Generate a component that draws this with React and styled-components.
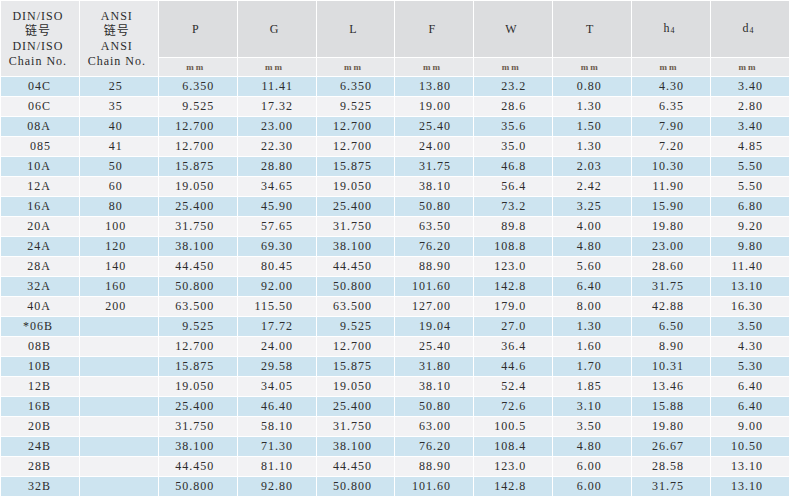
import React from "react";
import styled, { createGlobalStyle } from "styled-components";

const GlobalStyle = createGlobalStyle`
  body {
    margin: 0;
    background: #ffffff;
    font-family: "Liberation Serif", "Noto Sans CJK SC", serif;
  }
`;

const heads = ["P", "G", "L", "F", "W", "T", "h", "d"];

const rows = [
  ["04C", "25", "6.350", "11.41", "6.350", "13.80", "23.2", "0.80", "4.30", "3.40"],
  ["06C", "35", "9.525", "17.32", "9.525", "19.00", "28.6", "1.30", "6.35", "2.80"],
  ["08A", "40", "12.700", "23.00", "12.700", "25.40", "35.6", "1.50", "7.90", "3.40"],
  ["085", "41", "12.700", "22.30", "12.700", "24.00", "35.0", "1.30", "7.20", "4.85"],
  ["10A", "50", "15.875", "28.80", "15.875", "31.75", "46.8", "2.03", "10.30", "5.50"],
  ["12A", "60", "19.050", "34.65", "19.050", "38.10", "56.4", "2.42", "11.90", "5.50"],
  ["16A", "80", "25.400", "45.90", "25.400", "50.80", "73.2", "3.25", "15.90", "6.80"],
  ["20A", "100", "31.750", "57.65", "31.750", "63.50", "89.8", "4.00", "19.80", "9.20"],
  ["24A", "120", "38.100", "69.30", "38.100", "76.20", "108.8", "4.80", "23.00", "9.80"],
  ["28A", "140", "44.450", "80.45", "44.450", "88.90", "123.0", "5.60", "28.60", "11.40"],
  ["32A", "160", "50.800", "92.00", "50.800", "101.60", "142.8", "6.40", "31.75", "13.10"],
  ["40A", "200", "63.500", "115.50", "63.500", "127.00", "179.0", "8.00", "42.88", "16.30"],
  ["*06B", "", "9.525", "17.72", "9.525", "19.04", "27.0", "1.30", "6.50", "3.50"],
  ["08B", "", "12.700", "24.00", "12.700", "25.40", "36.4", "1.60", "8.90", "4.30"],
  ["10B", "", "15.875", "29.58", "15.875", "31.80", "44.6", "1.70", "10.31", "5.30"],
  ["12B", "", "19.050", "34.05", "19.050", "38.10", "52.4", "1.85", "13.46", "6.40"],
  ["16B", "", "25.400", "46.40", "25.400", "50.80", "72.6", "3.10", "15.88", "6.40"],
  ["20B", "", "31.750", "58.10", "31.750", "63.00", "100.5", "3.50", "19.80", "9.00"],
  ["24B", "", "38.100", "71.30", "38.100", "76.20", "108.4", "4.80", "26.67", "10.50"],
  ["28B", "", "44.450", "81.10", "44.450", "88.90", "123.0", "6.00", "28.58", "13.10"],
  ["32B", "", "50.800", "92.80", "50.800", "101.60", "142.8", "6.00", "31.75", "13.10"],
];

// digits are 7px wide with the letter spacing, the point 4px
const textWidth = (s) => [...s].reduce((w, c) => w + (c === "." ? 4 : 7), 0);
const colWidths = rows[0].map((_, i) =>
  Math.max(...rows.map((r) => textWidth(r[i])))
);

const Table = styled.table`
  width: 790px;
  table-layout: fixed;
  border-collapse: collapse;
  color: #2c2c2c;
  font-size: 12px;
  letter-spacing: 1px;
`;

const HeadCell = styled.th`
  font-weight: normal;
  text-align: center;
  vertical-align: middle;
  border: 1px solid #ffffff;
  padding: 0 4px 0 0;
  height: ${(p) => p.$h}px;
  background: ${(p) => p.$bg};
  line-height: 15px;
`;

const Unit = styled.th`
  font-weight: bold;
  font-size: 9px;
  letter-spacing: 2px;
  color: #6a5a4c;
  border: 1px solid #ffffff;
  padding: 0 4px 0 0;
  height: 18px;
  line-height: 18px;
  background: #e8e9eb;
`;

const Sub = styled.sub`
  font-size: 8px;
  vertical-align: -1px;
  letter-spacing: 0;
`;

const Row = styled.tr`
  background: ${(p) => (p.$blue ? "#cde4f0" : "#f2f2f4")};
`;

const Cell = styled.td`
  border: 1px solid #ffffff;
  height: 19px;
  padding: 0 6px 0 0;
  text-align: center;
  line-height: 19px;
`;

const Num = styled.span`
  display: inline-block;
  width: ${(p) => p.$w}px;
  text-align: ${(p) => p.$align};
  white-space: nowrap;
`;

export default function App() {
  return (
    <>
      <GlobalStyle />
      <Table>
        <thead>
          <tr>
            <HeadCell rowSpan={2} $h={57} $bg="#e8e9eb">
              DIN/ISO
              <br />
              链号
              <br />
              DIN/ISO
              <br />
              Chain No.
            </HeadCell>
            <HeadCell rowSpan={2} $h={57} $bg="#e8e9eb">
              ANSI
              <br />
              链号
              <br />
              ANSI
              <br />
              Chain No.
            </HeadCell>
            {heads.map((h, i) => (
              <HeadCell key={h} $h={56} $bg="#dcdddf">
                {h}
                {i >= 6 && <Sub>4</Sub>}
              </HeadCell>
            ))}
          </tr>
          <tr>
            {heads.map((h) => (
              <Unit key={h}>mm</Unit>
            ))}
          </tr>
        </thead>
        <tbody>
          {rows.map((r, ri) => (
            <Row key={ri} $blue={ri % 2 === 0}>
              {r.map((v, ci) => (
                <Cell key={ci}>
                  <Num $w={colWidths[ci]} $align={ci === 1 ? "center" : "right"}>
                    {v}
                  </Num>
                </Cell>
              ))}
            </Row>
          ))}
        </tbody>
      </Table>
    </>
  );
}
